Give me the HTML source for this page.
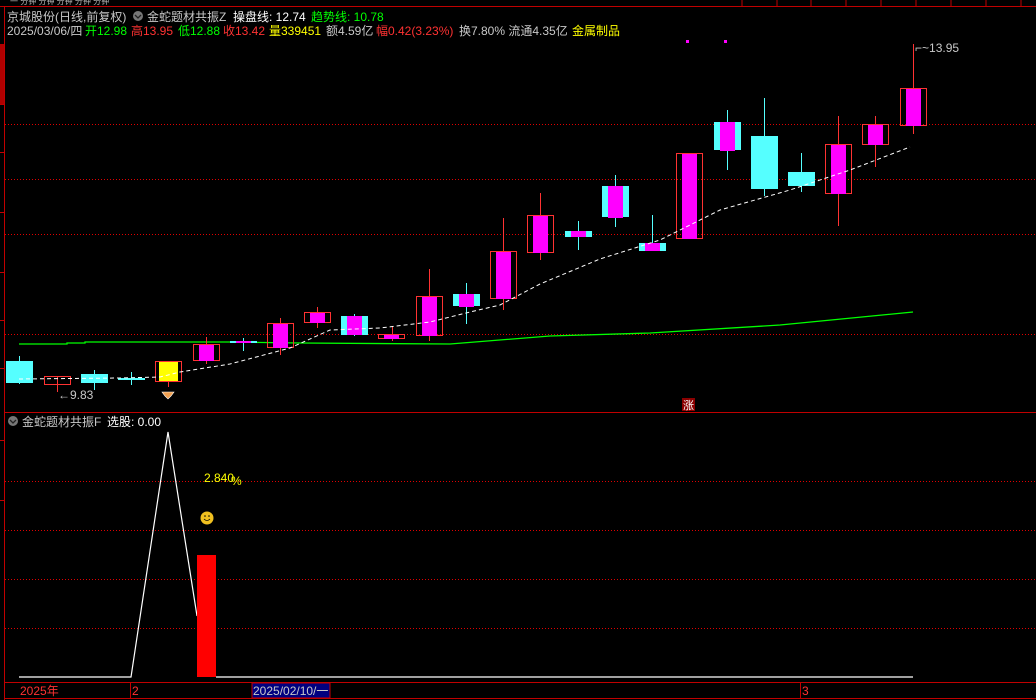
<!DOCTYPE html>
<html><head><meta charset="utf-8"><style>
html,body{margin:0;padding:0;background:#000;width:1036px;height:700px;overflow:hidden}
svg{display:block}
text{font-family:"Liberation Sans","Noto Sans CJK SC",sans-serif;font-size:12px}
</style></head><body>
<svg width="1036" height="700" xmlns="http://www.w3.org/2000/svg">
<rect width="1036" height="700" fill="#000"/>
<g fill="#bbb" font-size="8"><text x="10" y="4" style="font-size:8px">一 分钟 分钟 分钟 分钟 分钟</text></g>
<line x1="0" y1="6.5" x2="1036" y2="6.5" stroke="#c00000"/>
<g stroke="#c00000"><line x1="742" y1="0" x2="742" y2="6"/><line x1="777" y1="0" x2="777" y2="6"/><line x1="811" y1="0" x2="811" y2="6"/><line x1="846" y1="0" x2="846" y2="6"/><line x1="881" y1="0" x2="881" y2="6"/><line x1="916" y1="0" x2="916" y2="6"/><line x1="951" y1="0" x2="951" y2="6"/><line x1="986" y1="0" x2="986" y2="6"/><line x1="1021" y1="0" x2="1021" y2="6"/></g>
<line x1="4.5" y1="7" x2="4.5" y2="700" stroke="#c00000"/>
<rect x="0" y="44" width="4" height="60" fill="#b00000"/>
<g stroke="#c00000"><line x1="0" y1="104.5" x2="4" y2="104.5"/><line x1="0" y1="152.5" x2="4" y2="152.5"/><line x1="0" y1="212.5" x2="4" y2="212.5"/><line x1="0" y1="272.5" x2="4" y2="272.5"/><line x1="0" y1="320.5" x2="4" y2="320.5"/><line x1="0" y1="368.5" x2="4" y2="368.5"/><line x1="0" y1="440.5" x2="4" y2="440.5"/><line x1="0" y1="500.5" x2="4" y2="500.5"/></g>
<text x="7" y="21" fill="#c8c8c8">京城股份(日线,前复权)</text>
<circle cx="138" cy="16" r="5" fill="#777"/><path d="M135 15 l3 3 l3 -3" stroke="#222" fill="none" stroke-width="1.3"/>
<text x="147" y="21" fill="#c8c8c8">金蛇题材共振Z</text>
<text x="233" y="21" fill="#fff">操盘线: 12.74</text>
<text x="311" y="21" fill="#00ff00">趋势线: 10.78</text>
<text x="7" y="35" fill="#c8c8c8">2025/03/06/四</text>
<text x="85" y="35" fill="#00ff00">开12.98</text>
<text x="131" y="35" fill="#ff3232">高13.95</text>
<text x="178" y="35" fill="#00ff00">低12.88</text>
<text x="223" y="35" fill="#ff3232">收13.42</text>
<text x="269" y="35" fill="#ffff00">量339451</text>
<text x="326" y="35" fill="#c8c8c8">额4.59亿</text>
<text x="376" y="35" fill="#ff3232">幅0.42(3.23%)</text>
<text x="459" y="35" fill="#c8c8c8">换7.80% 流通4.35亿</text>
<text x="572" y="35" fill="#ffff00">金属制品</text>
<g stroke="#e00000" stroke-dasharray="1,2"><line x1="5" y1="124.5" x2="1036" y2="124.5"/><line x1="5" y1="179.5" x2="1036" y2="179.5"/><line x1="5" y1="234.5" x2="1036" y2="234.5"/><line x1="5" y1="334.5" x2="1036" y2="334.5"/>
<line x1="5" y1="481.5" x2="1036" y2="481.5"/><line x1="5" y1="530.5" x2="1036" y2="530.5"/><line x1="5" y1="579.5" x2="1036" y2="579.5"/><line x1="5" y1="628.5" x2="1036" y2="628.5"/></g>
<line x1="5" y1="412.5" x2="1036" y2="412.5" stroke="#c00000"/>
<polyline fill="none" stroke="#00ff00" stroke-width="1.3" points="19,344 67,344 67,343 85,343 85,342 230,342 300,343 450,344 550,336 650,333 780,325 913,312"/>
<g stroke-width="1">
<g stroke="#55ffff"><line x1="19.5" y1="356" x2="19.5" y2="384"/><line x1="94.5" y1="370" x2="94.5" y2="390"/><line x1="131.5" y1="372" x2="131.5" y2="385"/><line x1="243.5" y1="338" x2="243.5" y2="351"/><line x1="354.5" y1="314" x2="354.5" y2="336"/><line x1="466.5" y1="283" x2="466.5" y2="324"/><line x1="578.5" y1="221" x2="578.5" y2="250"/><line x1="615.5" y1="175" x2="615.5" y2="227"/><line x1="652.5" y1="215" x2="652.5" y2="251"/><line x1="727.5" y1="110" x2="727.5" y2="170"/><line x1="764.5" y1="98" x2="764.5" y2="196"/><line x1="801.5" y1="153" x2="801.5" y2="192"/></g>
<g stroke="#ff3232"><line x1="57.5" y1="376" x2="57.5" y2="392"/><line x1="168.5" y1="361" x2="168.5" y2="387"/><line x1="206.5" y1="337" x2="206.5" y2="364"/><line x1="280.5" y1="318" x2="280.5" y2="355"/><line x1="317.5" y1="307" x2="317.5" y2="328"/><line x1="392.5" y1="326" x2="392.5" y2="341"/><line x1="429.5" y1="269" x2="429.5" y2="341"/><line x1="503.5" y1="218" x2="503.5" y2="310"/><line x1="540.5" y1="193" x2="540.5" y2="260"/><line x1="689.5" y1="153" x2="689.5" y2="239"/><line x1="838.5" y1="116" x2="838.5" y2="226"/><line x1="875.5" y1="116" x2="875.5" y2="167"/><line x1="913.5" y1="44" x2="913.5" y2="134"/></g>
<rect x="6" y="361" width="27" height="22" fill="#55ffff"/>
<rect x="81" y="374" width="27" height="9" fill="#55ffff"/>
<rect x="118" y="378" width="27" height="2" fill="#55ffff"/>
<rect x="230" y="341" width="27" height="2" fill="#55ffff"/><rect x="236" y="341" width="15" height="2" fill="#ff00ff"/>
<rect x="341" y="316" width="27" height="19" fill="#55ffff"/><rect x="347" y="316" width="15" height="19" fill="#ff00ff"/>
<rect x="453" y="294" width="27" height="12" fill="#55ffff"/><rect x="459" y="294" width="15" height="13" fill="#ff00ff"/>
<rect x="565" y="231" width="27" height="6" fill="#55ffff"/><rect x="571" y="231" width="15" height="6" fill="#ff00ff"/>
<rect x="602" y="186" width="27" height="31" fill="#55ffff"/><rect x="608" y="186" width="15" height="32" fill="#ff00ff"/>
<rect x="639" y="243" width="27" height="8" fill="#55ffff"/><rect x="645" y="243" width="15" height="8" fill="#ff00ff"/>
<rect x="714" y="122" width="27" height="28" fill="#55ffff"/><rect x="720" y="122" width="15" height="29" fill="#ff00ff"/>
<rect x="751" y="136" width="27" height="53" fill="#55ffff"/>
<rect x="788" y="172" width="27" height="14" fill="#55ffff"/>
<g fill="none" stroke="#ff3232">
<rect x="44.5" y="376.5" width="26" height="8"/>
<rect x="155.5" y="361.5" width="26" height="20"/>
<rect x="193.5" y="344.5" width="26" height="16"/>
<rect x="267.5" y="323.5" width="26" height="24"/>
<rect x="304.5" y="312.5" width="26" height="10"/>
<rect x="378.5" y="334.5" width="26" height="4"/>
<rect x="416.5" y="296.5" width="26" height="39"/>
<rect x="490.5" y="251.5" width="26" height="47"/>
<rect x="527.5" y="215.5" width="26" height="37"/>
<rect x="676.5" y="153.5" width="26" height="85"/>
<rect x="825.5" y="144.5" width="26" height="49"/>
<rect x="862.5" y="124.5" width="26" height="20"/>
<rect x="900.5" y="88.5" width="26" height="37"/>
</g>
<g fill="#ff00ff">
<rect x="199" y="345" width="15" height="16"/><rect x="273" y="324" width="15" height="24"/><rect x="310" y="313" width="15" height="10"/><rect x="384" y="335" width="15" height="4"/><rect x="422" y="297" width="15" height="39"/><rect x="496" y="252" width="15" height="47"/><rect x="533" y="216" width="15" height="37"/><rect x="682" y="154" width="15" height="85"/><rect x="831" y="145" width="15" height="49"/><rect x="868" y="125" width="15" height="20"/><rect x="906" y="89" width="15" height="37"/>
</g>
<rect x="159" y="362" width="19" height="19" fill="#ffff00"/>
</g>
<polyline fill="none" stroke="#fff" stroke-width="1" stroke-dasharray="4,3" points="19,379 120,378 160,377 180,372 230,364 290,348 330,330 380,328 430,322 470,312 500,305 540,284 600,259 660,240 720,210 790,190 850,170 910,147"/>
<text x="58" y="399" fill="#c8c8c8">←9.83</text>
<text x="915" y="52" fill="#c8c8c8">⌐~13.95</text>
<path d="M162 392 h12 l-3 4 l-3 3 l-3 -3 z" fill="#f0a050" stroke="#fff" stroke-width="0.6"/>
<rect x="686" y="40" width="3" height="3" fill="#ff00ff"/><rect x="724" y="40" width="3" height="3" fill="#ff00ff"/>
<rect x="682" y="398" width="13" height="13" fill="#8b0000"/><text x="683" y="409" fill="#fff" style="font-size:11px">涨</text>
<circle cx="13" cy="421" r="5" fill="#777"/><path d="M10 420 l3 3 l3 -3" stroke="#222" fill="none" stroke-width="1.3"/>
<text x="22" y="426" fill="#c8c8c8">金蛇题材共振F</text>
<text x="107" y="426" fill="#fff">选股: 0.00</text>
<polyline fill="none" stroke="#fff" stroke-width="1.2" points="19,677 131,677 168,432 197,616"/>
<line x1="216" y1="677" x2="913" y2="677" stroke="#fff" stroke-width="1.2"/>
<rect x="197" y="555" width="19" height="122" fill="#ff0000"/>
<text x="204" y="482" fill="#ffff00">2.840</text><text x="231" y="485" fill="#ffff00">%</text>
<circle cx="207" cy="518" r="6.5" fill="#f0c020"/><circle cx="205" cy="516" r="0.8" fill="#000"/><circle cx="209" cy="516" r="0.8" fill="#000"/><path d="M204 519 q3 3 6 0" stroke="#000" fill="none" stroke-width="0.8"/>
<line x1="5" y1="682.5" x2="1036" y2="682.5" stroke="#c00000"/>
<line x1="5" y1="698.5" x2="1036" y2="698.5" stroke="#c00000"/>
<line x1="130.5" y1="682" x2="130.5" y2="698" stroke="#c00000"/>
<line x1="800.5" y1="682" x2="800.5" y2="698" stroke="#c00000"/>
<text x="20" y="695" fill="#ff3232">2025年</text>
<text x="132" y="695" fill="#ff3232">2</text>
<text x="802" y="695" fill="#ff3232">3</text>
<rect x="252" y="683" width="78" height="15" fill="#000080" stroke="#c00000"/>
<text x="253" y="695" fill="#c8c8c8">2025/02/10/一</text>
</svg>
</body></html>
